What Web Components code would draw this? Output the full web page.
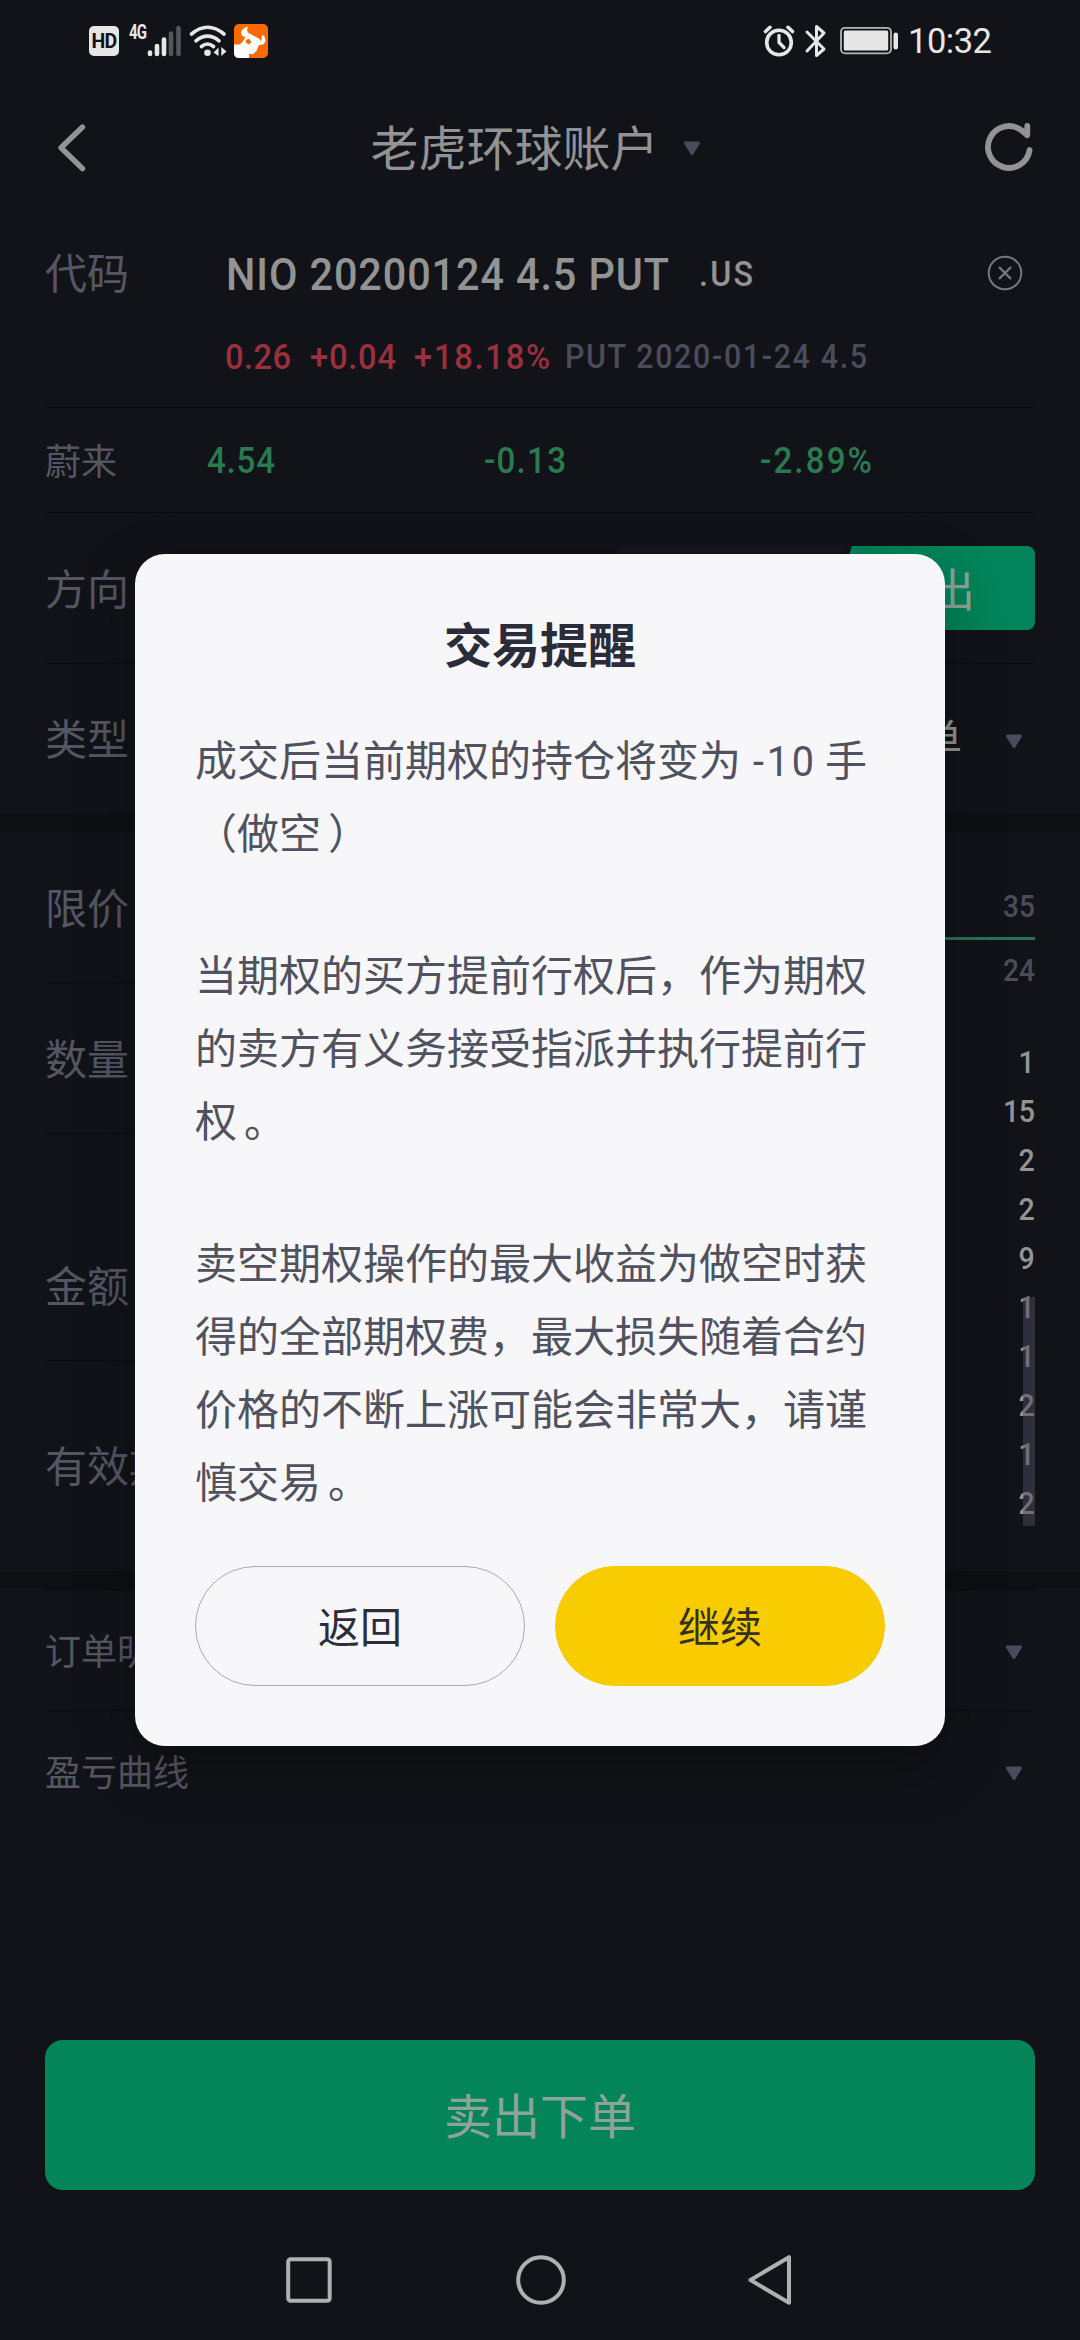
<!DOCTYPE html>
<html lang="zh-CN">
<head>
<meta charset="utf-8">
<title>老虎环球账户</title>
<style>
html,body{margin:0;padding:0;background:#121318}
body{font-family:Roboto,"Noto Sans CJK SC",sans-serif;width:1080px;height:2340px;overflow:hidden}
</style>
</head>
<body>
<trade-app></trade-app>
<script>
const define=(name,html,setup)=>customElements.define(name,class extends HTMLElement{
  connectedCallback(){
    if(this.shadowRoot)return;
    this.attachShadow({mode:'open'}).innerHTML=html;
    if(setup)setup(this,this.shadowRoot);
  }
});

/* Condensed figures; "w" fixes the run width through letter-spacing */
define('num-text',`<style>
:host{display:block;flex:none;white-space:pre;line-height:1.2}
span{display:inline-block;transform-origin:0 50%}
:host(:not([w])) span{transform-origin:100% 50%}
</style><span><slot></slot></span>`,(el,root)=>{
  const s=root.querySelector('span');
  el.style.fontSize=el.getAttribute('size')+'px';
  const k=+(el.getAttribute('k')||.92);
  const w=+el.getAttribute('w');
  if(w){
    const n=el.textContent.length;
    s.style.letterSpacing=((w/k-s.getBoundingClientRect().width)/Math.max(1,n-1)).toFixed(3)+'px';
    el.style.width=w+'px';
  }
  s.style.transform=`scaleX(${k})`;
});

define('caret-down',`<style>:host{display:block;flex:none;width:18px;height:15px}svg{display:block}</style>
<svg width="18" height="15" viewBox="0 0 18 15"><path d="M2.500 2h13L9 12.500z" fill="#4a4b5d" stroke="#4a4b5d" stroke-width="3" stroke-linejoin="round"/></svg>`);

define('status-bar',`<style>
:host{display:flex;height:80px;padding:2px 88px 0 89px;box-sizing:border-box;align-items:center;justify-content:space-between;color:#e6e6e6}
div{display:flex;align-items:center}
svg{display:block}
.hd{width:30px;height:30px;border-radius:5px;background:#e6e6e6;color:#121318;font:700 19.500px/31px Roboto,sans-serif;text-align:center;letter-spacing:-.8px}
.g{width:17px;margin:-19px 0 0 10px;font-weight:700}
</style>
<div>
 <span class="hd">HD</span><num-text class="g" size="20" w="18" k=".75">4G</num-text>
 <svg width="34" height="32" viewBox="146 24 34 32" stroke-width="4.600" stroke-linecap="round"><g stroke="#e6e6e6"><path d="M149 51.500V53M156 45V53M163 38.500V53"/></g><g stroke="#55565a"><path d="M170 32.500V53M177.500 27V53"/></g></svg>
 <svg style="margin-left:8px" width="38" height="32" viewBox="188 24 38 32" fill="none" stroke="#e6e6e6" stroke-width="3.600" stroke-linecap="round"><path d="M190.500 33Q206.500 19.500 223 33M195 39.800Q206.500 30.500 218 39.800M200.500 45.500Q206.500 40.500 212.500 45.500"/><circle cx="206.500" cy="51.800" r="3.300" fill="#e6e6e6" stroke="none"/><path d="M217.500 46.500V55L212.500 51.500zM220.300 55V46L225.500 50.500z" fill="#e6e6e6" stroke="none"/></svg>
 <svg style="margin-left:7px" width="34" height="34" viewBox="0 0 34 34"><rect width="34" height="34" rx="5" fill="#ff6a00"/><path d="M0 20.500H5.500L8.500 18L11.500 13Q7 12.500 7 8.500Q8 4 14 2.500Q12 6.500 14.500 9L25 14.500L26.500 17Q28.500 14.500 28 10.500Q31.800 12.500 31.300 17.500Q30 21.500 25 21L22.500 27L19 30H15V34H5Q0 34 0 29z" fill="#fff"/><path d="M12 16L15 14.800L17.500 18L15 20.500L12 18.800z" fill="#ff6a00"/></svg>
</div>
<div>
 <svg width="32" height="34" viewBox="763 23 32 34" fill="none" stroke="#e6e6e6" stroke-linecap="round" stroke-linejoin="round"><circle cx="779" cy="41.500" r="12.300" stroke-width="3.600"/><path d="M779 34.500V41.500L784 46.500" stroke-width="3.300"/><path d="M765.500 30.500L770 26.300M788 26.300L792.500 30.500" stroke-width="3.600"/></svg>
 <svg style="margin-left:9px" width="24" height="34" viewBox="804 23 24 34" fill="none" stroke="#e6e6e6" stroke-width="3" stroke-linejoin="round" stroke-linecap="round"><path d="M807 31L824 48L816.500 54.500V25.500L824 32L807 50"/></svg>
 <svg style="margin-left:12px" width="60" height="30" viewBox="840 26 60 30"><rect x="841" y="27.800" width="50" height="25.500" rx="4" fill="none" stroke="#b5b5b7" stroke-width="1.800"/><rect x="843.800" y="30.500" width="44.400" height="20" rx="1.500" fill="#e6e6e6"/><rect x="893.500" y="32.500" width="4.500" height="17" rx="2.200" fill="#e6e6e6"/></svg>
 <num-text size="34.500" w="84" k="1" style="margin-left:8px;margin-top:1px">10:32</num-text>
</div>`);

define('nav-header',`<style>
:host{display:flex;height:136px;align-items:center;padding:0 45px 0 57px;color:#939393;box-sizing:border-box}
svg{display:block;flex:none}
.t{flex:1;display:flex;align-items:center;justify-content:center;gap:24px;font-size:48px;line-height:60px;padding-right:1px}
.t span{margin-top:3px}
</style>
<svg width="32" height="50" viewBox="58 122.500 32 50" fill="none" stroke="#939393" stroke-width="5.400" stroke-linecap="round" stroke-linejoin="round"><path d="M83.500 126.500L62 147.200L83.500 168"/></svg>
<div class="t"><span>老虎环球账户</span><caret-down></caret-down></div>
<svg width="52" height="52" viewBox="982 122 52 52" fill="none" stroke="#939393" stroke-width="5.800" stroke-linecap="round" stroke-linejoin="round"><path d="M1028.600 150A20.900 20.900 0 1 1 1020.500 130.300L1026.300 135.200V126"/></svg>`);

/* One form line: label slot on the left, content on the right */
define('form-row',`<style>
:host{display:flex;align-items:center;box-sizing:border-box;border-bottom:1px solid #0a0b0e;height:151px;color:#545663;font-size:42px;line-height:54px}
:host([plain]){border-bottom-color:transparent}
:host([small]){font-size:36px}
.v{flex:1;display:flex;align-items:center;height:100%}
.l{padding-top:5px}
</style><span class="l"><slot name="label"></slot></span><div class="v"><slot></slot></div>`);

define('code-section',`<style>
:host{display:block;height:192px;border-bottom:1px solid #0a0b0e;box-sizing:border-box}
.a{height:114px;display:flex;align-items:center;color:#939393}
.l{font-size:42px;line-height:54px;color:#545663;width:180px;margin-top:4px}
.b{height:52px;display:flex;align-items:center;padding:1px 0 0 180px;color:#9b2f3d}
num-text{font-weight:500}
.x{margin-left:auto;margin-right:12px;display:block}
</style>
<div class="a"><span class="l">代码</span><num-text size="45" w="443" style="margin:4px 0 0 1px">NIO 20200124 4.5 PUT</num-text><num-text size="35" w="54" style="margin-left:30px;margin-top:3px">.US</num-text>
<svg class="x" width="36" height="36" viewBox="0 0 36 36" fill="none" stroke="#77787b" stroke-width="2"><circle cx="18" cy="18" r="16.300"/><path d="M12 12L24 24M24 12L12 24" stroke-width="2.400"/></svg></div>
<div class="b"><num-text size="35.500" w="66">0.26</num-text><num-text size="35.500" w="86" style="margin-left:19px">+0.04</num-text><num-text size="35.500" w="136" style="margin-left:18px">+18.18%</num-text><num-text size="33" w="302" style="margin-left:15px;color:#4b4c5b">PUT 2020-01-24 4.5</num-text></div>`);

define('direction-switch',`<style>
:host{display:flex;width:420px;height:84px;margin-left:auto}
.buy,.sell{height:84px}
.buy{width:229px;background:#16171c;border-radius:8px 0 0 8px;clip-path:polygon(0 0,100% 0,87% 100%,0 100%)}
.sell{width:211px;margin-left:-20px;background:#02845a;border-radius:0 8px 8px 0;clip-path:polygon(28px 0,100% 0,100% 100%,0 100%);color:#8fa399;font-size:45px;line-height:91px;box-sizing:border-box;padding-left:61px;text-align:left}
</style><div class="buy"></div><div class="sell">卖出</div>`);

define('order-form',`<style>
:host{display:flex;height:739px;padding:0 45px;box-sizing:border-box}
.f{width:520px}
.d{flex:1;display:flex;flex-direction:column;align-items:stretch;position:relative}
.lv{color:#4b4c5b;height:61px;display:flex;justify-content:flex-end;align-items:center;padding-top:2px;box-sizing:border-box}
.lv.ask{height:105px;padding-top:46px}
.g{height:3px;background:#2b7350}
.list{padding-top:37px}
.list num-text,.lv num-text{font-weight:500}
.list div{height:49px;display:flex;align-items:center;justify-content:flex-end;color:#949494}
.bar{position:absolute;right:0;top:465px;width:12px;height:229px;background:rgba(75,76,96,.5)}
</style>
<div class="f">
<form-row><span slot="label">限价</span></form-row>
<form-row><span slot="label">数量</span></form-row>
<form-row style="height:227px;padding-top:77px"><span slot="label">金额</span></form-row>
<form-row plain style="height:210px"><span slot="label">有效期</span></form-row>
</div>
<div class="d">
<div class="lv ask"><num-text size="30.500" w="32">35</num-text></div><div class="g"></div>
<div class="lv"><num-text size="30.500" w="32">24</num-text></div>
<div class="list"></div><div class="bar"></div>
</div>`,(el,root)=>{
  root.querySelector('.list').innerHTML=[1,15,2,2,9,1,1,2,1,2].map(n=>`<div><num-text size="31"${n>9?' w="32"':''}>${n}</num-text></div>`).join('');
});

define('soft-nav',`<style>:host{display:flex;justify-content:center;align-items:center;gap:181px;height:60px;padding-top:60px}svg{display:block}</style>
<svg width="50" height="52" viewBox="0 0 50 52"><rect x="4.200" y="5.200" width="41.500" height="41.500" rx="2.500" fill="none" stroke="#b0b0b0" stroke-width="4"/></svg>
<svg width="52" height="52" viewBox="0 0 52 52"><circle cx="26" cy="26" r="22.800" fill="none" stroke="#b0b0b0" stroke-width="4"/></svg>
<svg width="48" height="52" viewBox="2 0 48 52"><path d="M43 3.200V48.800L4.500 26z" fill="none" stroke="#b0b0b0" stroke-width="4" stroke-linejoin="round"/></svg>`);

define('pill-button',`<style>
:host{display:flex;flex:1;height:120px;border-radius:60px;box-sizing:border-box;border:1px solid #a9aab8;align-items:center;justify-content:center;font-size:42px;line-height:60px;color:#2b2d3a;padding-top:5px}
:host([primary]){background:#f9cc02;border-color:#f9cc02;color:#33311f}
</style><span><slot></slot></span>`);

define('alert-dialog',`<style>
:host{display:flex;flex-direction:column;width:810px;height:1192px;background:#f7f7f9;border-radius:30px;box-sizing:border-box;padding:57px 60px 60px;box-shadow:0 20px 60px rgba(0,0,0,.32);color:#50525f}
h2{margin:0;font-size:48px;line-height:72px;font-weight:700;text-align:center;color:#2a2c39}
.c{margin-top:42px;flex:1;min-height:0;font-size:42px;line-height:73px;white-space:nowrap}
.f{display:flex;gap:30px}
</style><h2><slot name="title"></slot></h2><div class="c"><slot></slot></div><div class="f"><slot name="actions"></slot></div>`);

define('trade-app',`<style>
:host{display:block;position:relative;width:1080px;height:2340px;background:#121318;overflow:hidden}
.p{padding:0 45px}
.band{height:18px;background:#0e0f12}
.p num-text{font-weight:500;color:#2a7a50;padding-top:4px}
.m{height:207px}
.go{margin:0 45px;height:150px;border-radius:18px;background:#048559;color:#8fa399;font-size:48px;line-height:60px;display:flex;align-items:center;justify-content:center;padding-top:5px;box-sizing:border-box}
.mask{position:absolute;inset:0;display:flex;justify-content:center;align-items:flex-start;padding-top:554px}
p{margin:0 0 69px}
.din{font-weight:450;display:inline-block;vertical-align:baseline;line-height:inherit;margin:0 11px 0 12px}
.q{margin-left:7px}
.r{margin-left:auto}
</style>
<status-bar></status-bar>
<nav-header></nav-header>
<div class="p">
<code-section></code-section>
<form-row small style="height:105px"><span slot="label">蔚来</span><num-text size="36" w="68" style="margin-left:90px">4.54</num-text><num-text size="36" w="82" style="margin-left:209px">-0.13</num-text><num-text size="36" w="112" style="margin-left:194px">-2.89%</num-text></form-row>
<form-row><span slot="label">方向</span><direction-switch></direction-switch></form-row>
<form-row plain style="height:150px"><span slot="label">类型</span><span class="r" style="color:#949494;margin-right:43px;padding-top:4px">单</span><caret-down style="margin:5px 12px 0 0"></caret-down></form-row>
</div>
<div class="band"></div>
<order-form></order-form>
<div class="band"></div>
<div class="p">
<form-row small style="height:122px;border-top:1px solid #0a0b0e"><span slot="label">订单明细</span><caret-down class="r" style="margin:4px 12px 0 auto"></caret-down></form-row>
<form-row small plain style="height:122px"><span slot="label">盈亏曲线</span><caret-down class="r" style="margin:4px 12px 0 auto"></caret-down></form-row>
</div>
<div class="m"></div>
<div class="go">卖出下单</div>
<soft-nav></soft-nav>
<div class="mask">
<alert-dialog><span slot="title">交易提醒</span>
<p>成交后当前期权的持仓将变为<num-text class="din" size="43" w="61">-10</num-text>手<br>（做空<span class="q">）</span></p>
<p>当期权的买方提前行权后，作为期权<br>的卖方有义务接受指派并执行提前行<br>权<span class="q">。</span></p>
<p>卖空期权操作的最大收益为做空时获<br>得的全部期权费，最大损失随着合约<br>价格的不断上涨可能会非常大，请谨<br>慎交易<span class="q">。</span></p>
<pill-button slot="actions">返回</pill-button><pill-button slot="actions" primary>继续</pill-button>
</alert-dialog>
</div>`);
</script>
</body>
</html>
